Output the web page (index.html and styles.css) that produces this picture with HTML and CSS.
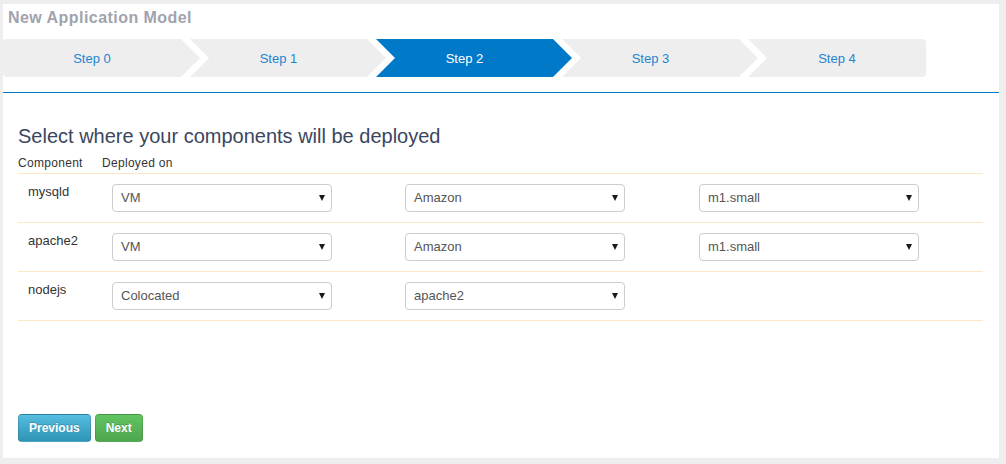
FILE: index.html
```html
<!DOCTYPE html>
<html>
<head>
<meta charset="utf-8">
<link rel="stylesheet" href="styles.css">
</head>
<body>
<div class="panel">
  <div class="title">New Application Model</div>
  <div class="wizard">
    <div class="step first">Step 0</div>
    <div class="step">Step 1</div>
    <div class="step active">Step 2</div>
    <div class="step">Step 3</div>
    <div class="step last">Step 4</div>
  </div>
  <div class="content">
    <h2 class="heading">Select where your components will be deployed</h2>
    <table class="deploy">
      <colgroup>
        <col class="c-name"><col class="c-sel1"><col class="c-sel2"><col class="c-sel3">
      </colgroup>
      <thead>
        <tr><th>Component</th><th colspan="3">Deployed on</th></tr>
      </thead>
      <tbody>
        <tr>
          <td class="name">mysqld</td>
          <td><div class="sel"><span>VM</span></div></td>
          <td><div class="sel"><span>Amazon</span></div></td>
          <td><div class="sel"><span>m1.small</span></div></td>
        </tr>
        <tr>
          <td class="name">apache2</td>
          <td><div class="sel"><span>VM</span></div></td>
          <td><div class="sel"><span>Amazon</span></div></td>
          <td><div class="sel"><span>m1.small</span></div></td>
        </tr>
        <tr>
          <td class="name">nodejs</td>
          <td><div class="sel"><span>Colocated</span></div></td>
          <td><div class="sel"><span>apache2</span></div></td>
          <td></td>
        </tr>
      </tbody>
    </table>
    <div class="actions">
      <button class="btn btn-info">Previous</button>
      <button class="btn btn-success">Next</button>
    </div>
  </div>
</div>
</body>
</html>
```

FILE: styles.css
```css
* { box-sizing: border-box; }
html, body { margin: 0; padding: 0; }
body {
  background: #eeeeee;
  font-family: "Liberation Sans", Arial, sans-serif;
  width: 1006px;
  height: 464px;
  overflow: hidden;
}
.panel {
  background: #ffffff;
  margin: 4px 7px 0 3px;
  width: 996px;
  padding-bottom: 16px;
}
.title {
  font-size: 16px;
  line-height: 18px;
  font-weight: bold;
  letter-spacing: 0.45px;
  color: #9fa3ae;
  padding: 5px 0 0 5px;
}
.wizard {
  display: flex;
  margin-top: 12px;
  height: 38px;
  padding-bottom: 15px;
  border-bottom: 1px solid #0079c8;
  box-sizing: content-box;
}
.step {
  width: 196px;
  height: 38px;
  flex: none;
  background: #eeeeee;
  color: #1f84d1;
  font-size: 13px;
  display: flex;
  align-items: center;
  justify-content: center;
  padding-right: 19px;
  margin-left: -10px;
  clip-path: polygon(0 0, calc(100% - 19px) 0, 100% 50%, calc(100% - 19px) 100%, 0 100%, 19px 50%);
}
.step.first {
  width: 197px;
  margin-left: 0;
  border-radius: 4px 0 0 4px;
  clip-path: polygon(0 0, calc(100% - 19px) 0, 100% 50%, calc(100% - 19px) 100%, 0 100%);
}
.step.last {
  width: 178px;
  padding-right: 0;
  border-radius: 0 4px 4px 0;
  clip-path: polygon(0 0, 100% 0, 100% 100%, 0 100%, 19px 50%);
}
.step.active {
  background: #0079c8;
  color: #ffffff;
}
.content {
  padding: 0 16px 0 15px;
}
.heading {
  margin: 31px 0 0 0;
  font-size: 20px;
  line-height: 24px;
  font-weight: normal;
  color: #3a4660;
}
.deploy {
  margin-top: 7px;
  width: 965px;
  table-layout: fixed;
  border-collapse: collapse;
}
.c-name { width: 84px; }
.c-sel1 { width: 293px; }
.c-sel2 { width: 294px; }
.c-sel3 { width: 294px; }
.deploy th {
  text-align: left;
  font-weight: normal;
  font-size: 12px;
  line-height: 16px;
  letter-spacing: 0.3px;
  color: #333333;
  padding: 0 0 2px 0;
  border-bottom: 1px solid #fce8c6;
}
.deploy td {
  padding: 10px;
  vertical-align: top;
  border-bottom: 1px solid #fce8c6;
  font-size: 13px;
  line-height: 15px;
  color: #333333;
}
.sel {
  position: relative;
  width: 220px;
  height: 28px;
  border: 1px solid #cccccc;
  border-radius: 4px;
  background: #ffffff;
  color: #555555;
  font-size: 13px;
  line-height: 26px;
  padding-left: 8px;
}
.sel::after {
  content: "";
  position: absolute;
  right: 6px;
  top: 10px;
  border-left: 3.5px solid transparent;
  border-right: 3.5px solid transparent;
  border-top: 6px solid #1a1a1a;
}
.actions {
  margin-top: 93px;
  display: flex;
  gap: 4px;
}
.btn {
  font-family: "Liberation Sans", Arial, sans-serif;
  font-size: 12px;
  font-weight: bold;
  color: #ffffff;
  height: 28px;
  padding: 0 10px;
  border: 1px solid rgba(0, 0, 0, 0.12);
  border-radius: 4px;
  text-shadow: 0 -1px 0 rgba(0, 0, 0, 0.2);
}
.btn-info {
  background: linear-gradient(#55bde0, #2f94b6);
}
.btn-success {
  background: linear-gradient(#62c462, #4ea64e);
}
```
